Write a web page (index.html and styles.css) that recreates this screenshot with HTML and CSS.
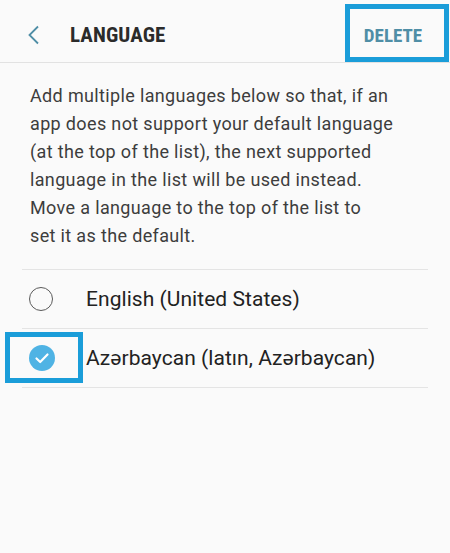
FILE: index.html
```html
<!DOCTYPE html>
<html lang="en">
<head>
<meta charset="UTF-8" />
<meta name="viewport" content="width=device-width, initial-scale=1" />
<title>Language</title>
<link rel="stylesheet" href="styles.css">
</head>
<body>

<header class="topbar">
  <button class="back" aria-label="Back">
    <svg width="14" height="20" viewBox="0 0 14 20"><path d="M11 1.5 L2.5 10 L11 18.5" fill="none" stroke="#4f8ea6" stroke-width="1.8"/></svg>
  </button>
  <h1 class="title">LANGUAGE</h1>
  <button class="delete">DELETE</button>
</header>

<p class="intro">
  Add multiple languages below so that, if an<br>
  app does not support your default language<br>
  (at the top of the list), the next supported<br>
  language in the list will be used instead.<br>
  Move a language to the top of the list to<br>
  set it as the default.
</p>

<ul class="langs">
  <li>
    <span class="radio"></span>
    <span class="name">English (United States)</span>
  </li>
  <li>
    <span class="radio checked">
      <svg width="26" height="26" viewBox="0 0 26 26"><path d="M7.5 13.5 L11.2 17 L18.5 9.5" fill="none" stroke="#fff" stroke-width="2.2" stroke-linecap="round" stroke-linejoin="round"/></svg>
    </span>
    <span class="name">Azərbaycan (latın, Azərbaycan)</span>
    <span class="mark"></span>
  </li>
</ul>

</body>
</html>
```

FILE: styles.css
```css
body {
  font-family: Roboto, "Noto Sans", sans-serif;
  background: #fafafa;
  margin: 0;
  color: #222;
}
.topbar {
  display: flex;
  align-items: center;
  height: 62px;
  border-bottom: 1px solid #e2e2e2;
}
.back {
  background: none;
  border: none;
  padding: 0;
  margin: 8px 0 0 27px;
  width: 14px;
  height: 20px;
  display: flex;
}
.title {
  margin: 8px 0 0 29px;
  font-family: "Liberation Sans Narrow", "Roboto Condensed", Roboto, sans-serif;
  font-weight: 700;
  font-size: 21px;
  color: #2b2b2b;
  letter-spacing: 0.1px;
}
.delete {
  margin-left: auto;
  margin-right: 1px;
  align-self: flex-end;
  height: 58px;
  width: 104px;
  background: none;
  border: 5px solid #1a9dd9;
  padding: 4px 8px 0 0;
  font-family: "Liberation Sans Narrow", "Roboto Condensed", Roboto, sans-serif;
  font-weight: 700;
  font-size: 19px;
  color: #4f8ea6;
}
.intro {
  margin: 19px 0 19px;
  padding: 0 30px;
  font-size: 18px;
  line-height: 28px;
  letter-spacing: 0.35px;
  color: #3d3d3d;
}
.langs {
  list-style: none;
  margin: 0 22px;
  padding: 0;
}
.langs li {
  position: relative;
  display: flex;
  align-items: center;
  height: 58px;
  border-top: 1px solid #e4e4e4;
}
.langs li:last-child {
  border-bottom: 1px solid #e4e4e4;
}
.radio {
  width: 22px;
  height: 22px;
  margin-left: 7px;
  margin-right: 33px;
  border: 1.5px solid #5a5a5a;
  border-radius: 50%;
}
.radio.checked {
  width: 26px;
  height: 26px;
  border: none;
  background: #4fb3e4;
  margin-right: 31px;
}
.name {
  font-size: 21px;
  letter-spacing: 0.05px;
  color: #222;
}
.mark {
  position: absolute;
  left: -17px;
  top: 3px;
  width: 68px;
  height: 41px;
  border: 5px solid #1a9dd9;
}
```
